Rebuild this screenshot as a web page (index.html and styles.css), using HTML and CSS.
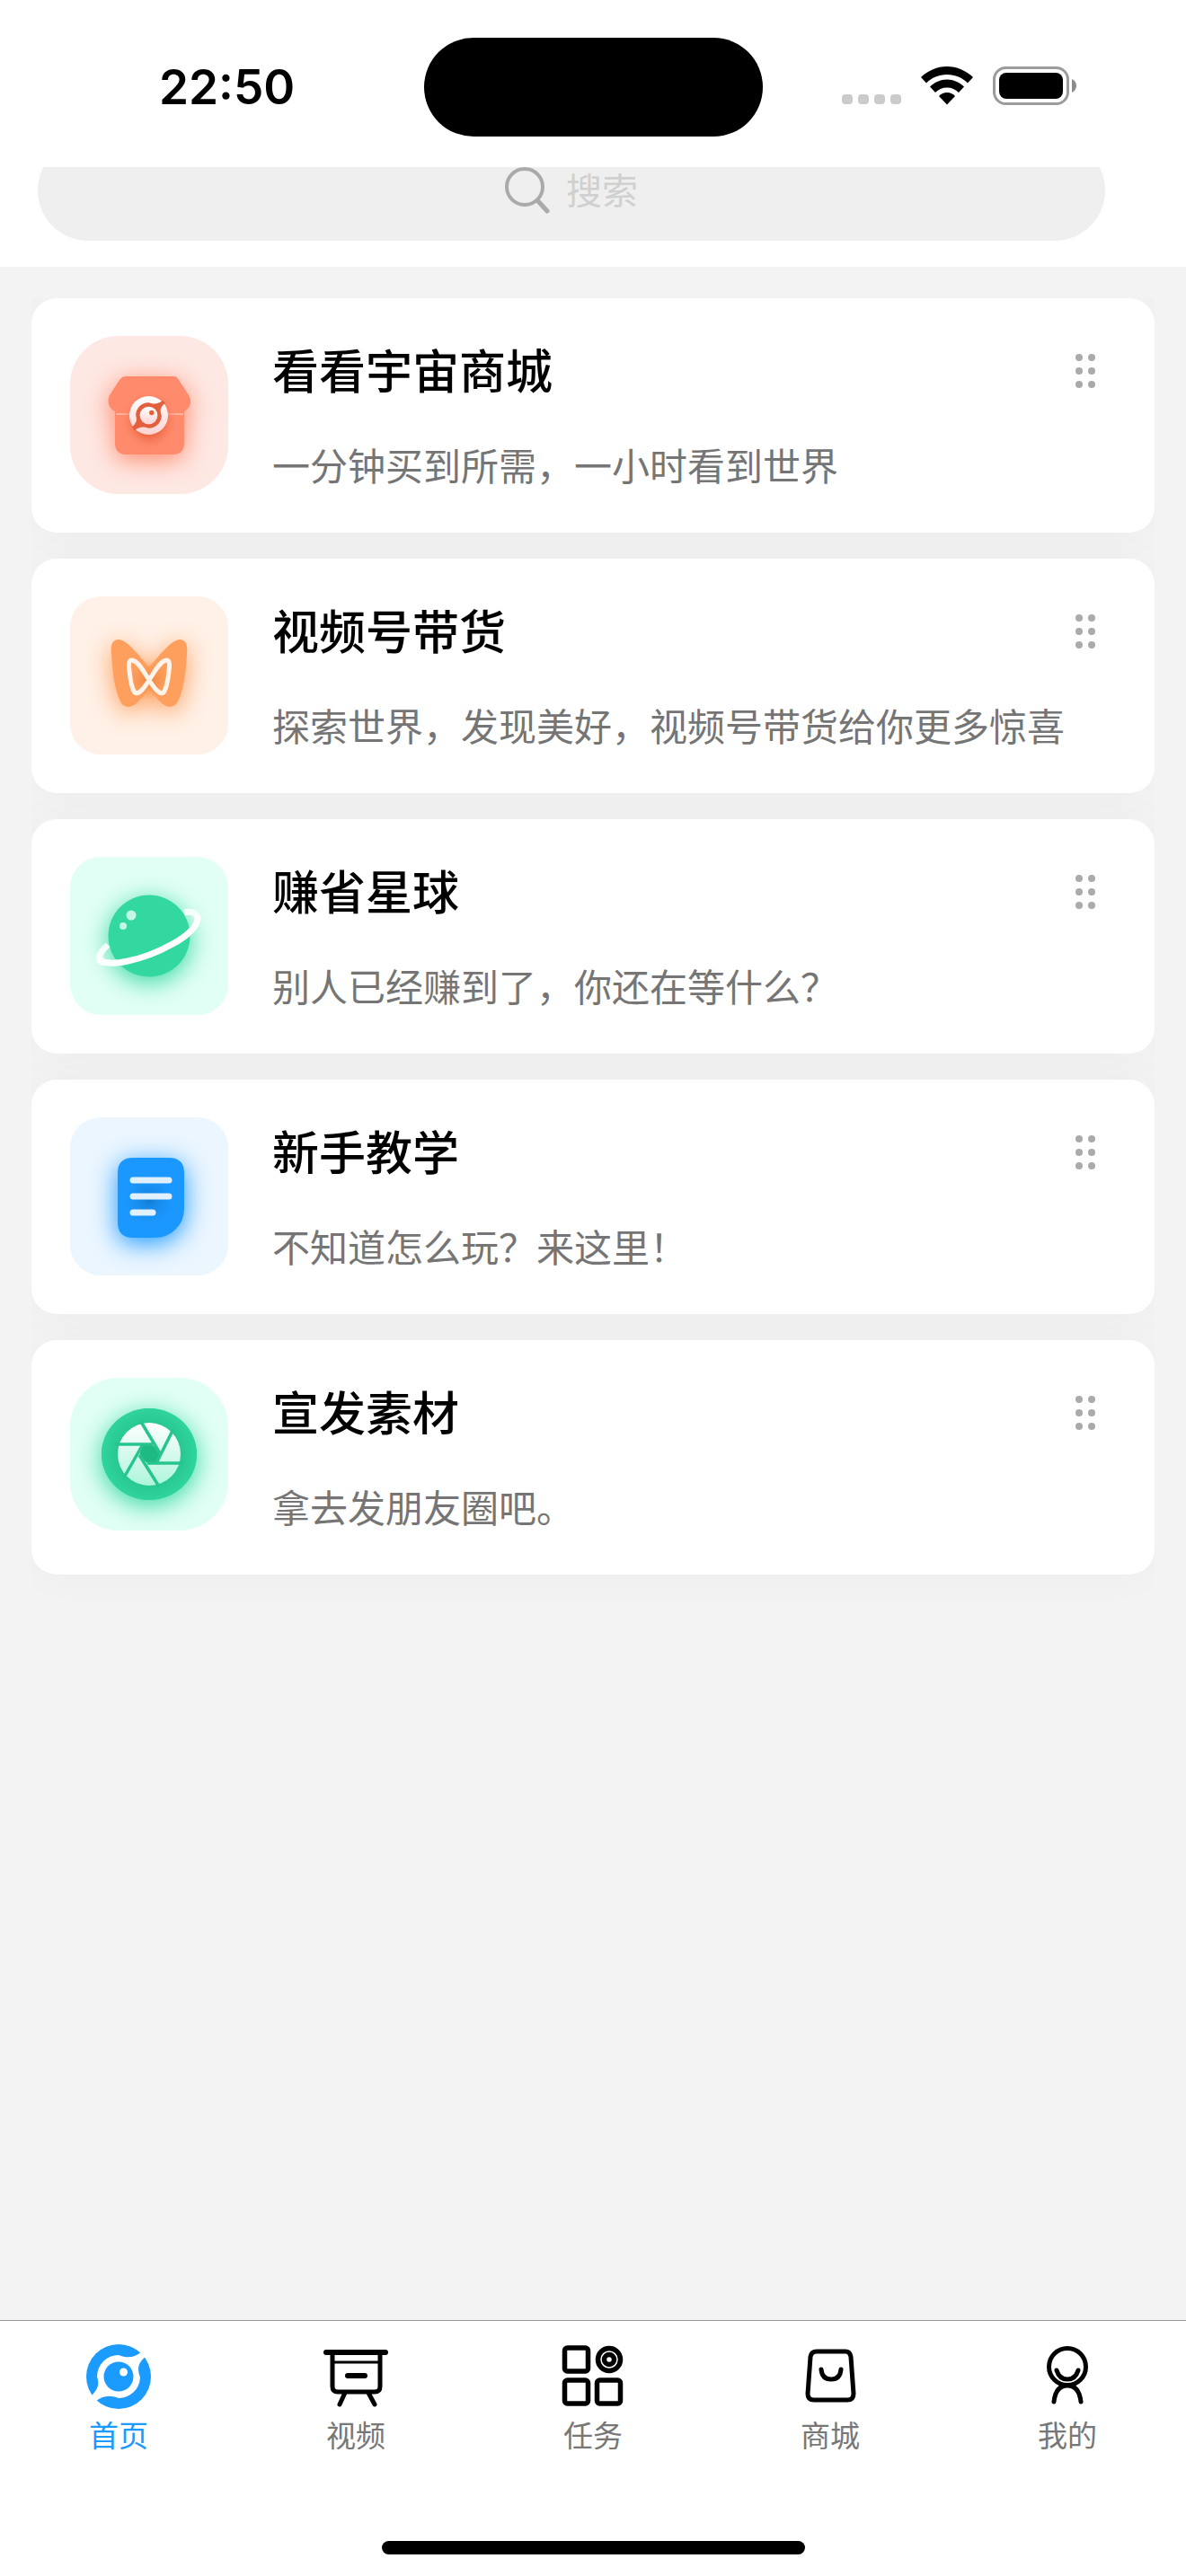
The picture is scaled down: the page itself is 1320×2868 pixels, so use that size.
FILE: index.html
```html
<!DOCTYPE html>
<html lang="zh-CN">
<head>
  <meta charset="UTF-8">
  <meta name="viewport" content="width=device-width, initial-scale=1.0">
  <title>首页</title>
  <link rel="stylesheet" href="styles.css">
</head>
<body>
  <!-- logo, shared by the shop card and the home tab -->
  <svg class="defs" aria-hidden="true">
    <defs>
      <symbol id="logo" viewBox="0 0 72 72">
        <circle class="logo-disc" cx="36" cy="36" r="36"/>
        <path class="logo-gap" d="M36 12 C46 16 54 15 62 8 L67 13 C58 20 56 26 60 37 A24 24 0 0 1 36 60 C26 56 18 57 10 64 L5 58 C13 50 15 45 12 36 A24 24 0 0 1 36 12 Z"/>
        <circle class="logo-disc" cx="36" cy="36" r="16.500"/>
        <circle class="logo-gap" cx="41.500" cy="31" r="4.500"/>
      </symbol>
      <linearGradient id="fade-pink" x1="0" y1="0" x2="0" y2="1">
        <stop offset="0" stop-color="#fff"/><stop offset="1" stop-color="#fdd3d3"/>
      </linearGradient>
      <linearGradient id="fade-green" x1="0" y1="0" x2="0" y2="1">
        <stop offset="0" stop-color="#fff"/><stop offset="1" stop-color="#adf5dc"/>
      </linearGradient>
      <radialGradient id="shade-red">
        <stop offset="0" stop-color="#e0542f"/><stop offset="0.5" stop-color="#e8633f" stop-opacity="0.8"/><stop offset="1" stop-color="#ff8a6c" stop-opacity="0"/>
      </radialGradient>
      <radialGradient id="shade-orange">
        <stop offset="0" stop-color="#e8833c"/><stop offset="1" stop-color="#ff9f5d" stop-opacity="0"/>
      </radialGradient>
      <radialGradient id="shade-blue">
        <stop offset="0" stop-color="#137cd4"/><stop offset="1" stop-color="#1b98ff" stop-opacity="0"/>
      </radialGradient>
      <radialGradient id="shade-green">
        <stop offset="0.3" stop-color="#1fba83"/><stop offset="1" stop-color="#30d49d"/>
      </radialGradient>
    </defs>
  </svg>

  <div class="status-bar">
    <div class="time">22:50</div>
    <div class="island"></div>
    <div class="status-icons">
      <svg width="66" height="12" viewBox="0 0 66 12" fill="#cbcbcb">
        <rect width="12" height="11" rx="4"/><rect x="18" width="12" height="11" rx="4"/><rect x="36" width="12" height="11" rx="4"/><rect x="54" width="12" height="11" rx="4"/>
      </svg>
      <svg width="58" height="43" viewBox="0 0 58 43">
        <path d="M29 0 C40 0 50 4.500 58 12 L52 18.500 C46 12.500 38 9 29 9 C20 9 12 12.500 6 18.500 L0 12 C8 4.500 18 0 29 0 Z"/>
        <path d="M29 14.500 C36 14.500 43 17.500 48 22.500 L42 29 C38.500 25.500 34 23.500 29 23.500 C24 23.500 19.500 25.500 16 29 L10 22.500 C15 17.500 22 14.500 29 14.500 Z"/>
        <path d="M29 29 C32.500 29 35.500 30.500 38 33 L29 42.500 L20 33 C22.500 30.500 25.500 29 29 29 Z"/>
      </svg>
      <svg width="94" height="43" viewBox="0 0 94 43">
        <rect x="1.500" y="1.500" width="82" height="40" rx="13" fill="none" stroke="#9b9b9b" stroke-width="3"/>
        <rect x="7" y="7" width="71" height="29" rx="8"/>
        <path d="M88 14 C91 15.500 93 18 93 21.500 C93 25 91 27.500 88 29 Z" fill="#8c8c8c"/>
      </svg>
    </div>
  </div>

  <header class="search-area">
    <label class="search">
      <svg width="50" height="54" viewBox="0 0 50 54" fill="none" stroke="#aaa" stroke-linecap="round">
        <circle cx="22" cy="23" r="20" stroke-width="4"/>
        <path d="M36 38 L47 50" stroke-width="5"/>
      </svg>
      <input type="text" placeholder="搜索" aria-label="搜索">
    </label>
  </header>

  <main>
    <ul class="list">
      <li class="card">
        <svg class="tile round red" viewBox="0 0 176 176">
          <g class="glow">
            <path d="M50 84 H127 V119 Q127 132 114 132 H63 Q50 132 50 119 Z"/>
            <path d="M62 45 H115 Q119 45 121 49 L132 66 C138 77 130 86 118 86 H59 C47 86 39 77 44 66 L55 49 Q58 45 62 45 Z"/>
          </g>
          <path d="M51 87 H126" stroke="#ffb49f" stroke-width="2"/>
          <ellipse cx="88" cy="94" rx="32" ry="34" fill="url(#shade-red)"/>
          <use href="#logo" x="66" y="67" width="43" height="43"/>
        </svg>
        <div class="info">
          <h2>看看宇宙商城</h2>
          <p>一分钟买到所需，一小时看到世界</p>
        </div>
        <button class="handle" aria-label="拖动"><i></i><i></i><i></i><i></i><i></i><i></i></button>
      </li>

      <li class="card">
        <svg class="tile orange" viewBox="0 0 176 176">
          <path class="glow" d="M88 79 C76 65 64 49 54 48 C46 48 45 56 46 64 C47 85 50 105 56 117 C60 125 68 124 74 119 C80 113 84 108 88 103 C92 108 96 113 102 119 C108 124 115 125 120 117 C126 105 129 85 130 64 C131 56 130 48 122 48 C112 49 100 65 88 79 Z"/>
          <ellipse cx="88" cy="93" rx="28" ry="22" fill="url(#shade-orange)"/>
          <path d="M88 93 C82 84 76 72 69 71 C65 71 65 76 66 83 C67 93 69 103 72 107 C76 110 82 103 88 93 C94 84 100 72 107 71 C111 71 111 76 110 83 C109 93 107 103 104 107 C100 110 94 103 88 93 Z" fill="none" stroke="#fff3ea" stroke-width="5"/>
        </svg>
        <div class="info">
          <h2>视频号带货</h2>
          <p>探索世界，发现美好，视频号带货给你更多惊喜</p>
        </div>
        <button class="handle" aria-label="拖动"><i></i><i></i><i></i><i></i><i></i><i></i></button>
      </li>

      <li class="card">
        <svg class="tile green" viewBox="0 0 176 176">
          <circle class="glow" cx="88" cy="88" r="45.500"/>
          <path d="M42 98 C31 108 29 117 37 118 M127 62 C136 60 142 63 142 69" fill="none" stroke="#f5fffb" stroke-width="7"/>
          <path d="M33 113 C38 125 82 115 114 97 C131 88 142 77 142 68" fill="none" stroke="#fff" stroke-width="7" stroke-linecap="round"/>
          <circle cx="68" cy="65" r="5.500" fill="#c4f8e5"/>
          <circle cx="59" cy="77" r="4" fill="#c4f8e5"/>
        </svg>
        <div class="info">
          <h2>赚省星球</h2>
          <p>别人已经赚到了，你还在等什么？</p>
        </div>
        <button class="handle" aria-label="拖动"><i></i><i></i><i></i><i></i><i></i><i></i></button>
      </li>

      <li class="card">
        <svg class="tile blue" viewBox="0 0 176 176">
          <path class="glow" d="M70 45 H110 Q127 45 127 62 V101 Q127 116 117 125 Q108 134 94 134 H70 Q53 134 53 117 V62 Q53 45 70 45 Z"/>
          <ellipse cx="88" cy="92" rx="34" ry="34" fill="url(#shade-blue)"/>
          <path d="M70 70 H110 M70 88 H110 M70 106 H92" stroke="#e0f0ff" stroke-width="7" stroke-linecap="round"/>
        </svg>
        <div class="info">
          <h2>新手教学</h2>
          <p>不知道怎么玩？来这里！</p>
        </div>
        <button class="handle" aria-label="拖动"><i></i><i></i><i></i><i></i><i></i><i></i></button>
      </li>

      <li class="card">
        <svg class="tile round short green" viewBox="0 0 176 170">
          <ellipse class="glow" cx="88" cy="85" rx="53" ry="51"/>
          <ellipse cx="88" cy="85" rx="53" ry="51" fill="url(#shade-green)"/>
          <circle cx="88" cy="85" r="35" fill="url(#fade-green)"/>
          <path d="M91 74 L100 83 L97 95 L86 95 L77 87 L80 75 Z" fill="#1fba83"/>
          <path d="M79 49 L100 84 M115 57 L96 95 M126 95 H86 M99 121 L77 86 M60 111 L81 74 M50 74 H92" stroke="#27c58e" stroke-width="3.500"/>
        </svg>
        <div class="info">
          <h2>宣发素材</h2>
          <p>拿去发朋友圈吧。</p>
        </div>
        <button class="handle" aria-label="拖动"><i></i><i></i><i></i><i></i><i></i><i></i></button>
      </li>
    </ul>
  </main>

  <footer class="tab-bar">
    <nav class="tabs">
      <a class="tab active" href="#">
        <svg width="72" height="72"><use href="#logo"/></svg>
        <span>首页</span>
      </a>
      <a class="tab" href="#">
        <svg width="72" height="72" viewBox="0 0 72 72">
          <path d="M3 9 H69" stroke-width="6"/>
          <path d="M10 10 V47 Q10 53 16 53 H57 Q63 53 63 47 V10 M24 54 L18 67 M50 54 L57 67" stroke-width="5"/>
          <path d="M10 20 H63" stroke-width="3"/>
          <path d="M27 35 H46" stroke-width="6"/>
        </svg>
        <span>视频</span>
      </a>
      <a class="tab" href="#">
        <svg width="72" height="72" viewBox="0 0 72 72" stroke-width="5.500">
          <rect x="4.500" y="4" width="26" height="26" rx="3"/>
          <rect x="4.500" y="40" width="26" height="26" rx="3"/>
          <rect x="40.500" y="40" width="26" height="26" rx="3"/>
          <circle cx="54" cy="17" r="12.500"/>
          <circle cx="54" cy="17" r="5.500"/>
        </svg>
        <span>任务</span>
      </a>
      <a class="tab" href="#">
        <svg width="72" height="72" viewBox="0 0 72 72" stroke-width="5">
          <path d="M21 8 H53 Q58 8 59 14 L62 55 Q62 62 55 62 H18 Q11 62 11 55 L14 14 Q15 8 21 8 Z"/>
          <path d="M26 28 Q27 39 37 39 Q47 39 48 28"/>
        </svg>
        <span>商城</span>
      </a>
      <a class="tab" href="#">
        <svg width="72" height="72" viewBox="0 0 72 72" stroke-width="5">
          <circle cx="36" cy="25" r="20.500"/>
          <path d="M24 29 Q27 39 36 39 Q45 39 48 29 M21 64 Q23 46 36 46 Q49 46 51 64"/>
        </svg>
        <span>我的</span>
      </a>
    </nav>
    <div class="home-indicator"></div>
  </footer>
</body>
</html>
```
FILE: styles.css
```css
* {
  box-sizing: border-box;
}
body {
  margin: 0;
  min-height: 100vh;
  display: flex;
  flex-direction: column;
  background: #f3f3f3;
  color: #000;
  font-family: "Noto Sans CJK SC", sans-serif;
}
h2, p, ul {
  margin: 0;
  padding: 0;
}
svg {
  display: block;
  flex: none;
}
.defs {
  position: absolute;
  width: 0;
  height: 0;
}
.logo-disc {
  fill: var(--disc);
}
.logo-gap {
  fill: var(--gap);
}

/* status bar */
.status-bar {
  display: grid;
  grid-template-columns: 1fr 377px 1fr;
  align-items: center;
  height: 186px;
  padding: 42px 0 34px;
  background: #fff;
}
.time {
  padding-left: 177px;
  font: 600 53px/64px Inter, sans-serif;
}
.island {
  height: 110px;
  border-radius: 55px;
  background: #000;
}
.status-icons {
  display: flex;
  justify-content: flex-end;
  align-items: flex-end;
  gap: 22px;
  padding: 0 121px 4px 0;
}

/* search */
.search-area {
  padding: 0 90px 29px 42px;
  background: #fff;
  overflow: hidden;
}
.search {
  display: flex;
  justify-content: center;
  align-items: center;
  gap: 18px;
  height: 112px;
  margin-top: -30px;
  border-radius: 56px;
  background: #efefef;
}
.search input {
  width: 80px;
  padding: 0 0 4px;
  border: 0;
  outline: 0;
  background: none;
  font: 40px/56px "Noto Sans CJK SC", sans-serif;
}
.search input::placeholder {
  color: #d0d0d0;
  opacity: 1;
}

/* card list */
main {
  flex: 1;
  padding: 35px 35px 0;
}
.list {
  display: flex;
  flex-direction: column;
  gap: 29px;
  padding-bottom: 60px;
  list-style: none;
  overflow: hidden;
}
.card {
  display: flex;
  align-items: flex-start;
  min-height: 261px;
  padding: 42px 66px 42px 43px;
  border-radius: 28px;
  background: #fff;
  box-shadow: 0 0 54px rgba(0, 0, 0, 0.03);
}
.tile {
  width: 176px;
  height: 176px;
  border-radius: 34px;
}
.tile.round {
  border-radius: 54px;
}
.tile.short {
  height: 170px;
}
.red {
  --disc: url(#fade-pink);
  --gap: #e2603c;
  --main: #ff8a6c;
  background: #fee8e3;
}
.orange {
  --main: #ff9f5d;
  background: #fff1e7;
}
.green {
  --main: #33d8a0;
  background: #e2fff5;
}
.blue {
  --main: #1b98ff;
  background: #ebf6ff;
}
.glow {
  fill: var(--main);
  filter: drop-shadow(0 6px 14px var(--main));
}
.info {
  flex: 1;
  padding: 5px 0 0 49px;
}
.info h2 {
  font-size: 52px;
  line-height: 64px;
  font-weight: 500;
}
.info p {
  margin-top: 46px;
  font-size: 42px;
  line-height: 56px;
  color: #757575;
}
.handle {
  display: grid;
  grid-template-columns: 8px 8px;
  gap: 7px 6px;
  margin-top: 20px;
  padding: 0;
  border: 0;
  background: none;
}
.handle i {
  width: 8px;
  height: 8px;
  border-radius: 50%;
  background: #aaa;
}

/* tab bar */
.tab-bar {
  display: flex;
  flex-direction: column;
  justify-content: space-between;
  align-items: center;
  height: 285px;
  padding: 26px 0 24px;
  border-top: 1px solid #999;
  background: #fff;
}
.tabs {
  display: flex;
  align-self: stretch;
}
.tab {
  flex: 1;
  display: flex;
  flex-direction: column;
  align-items: center;
  gap: 8px;
  color: #777;
  font-size: 33px;
  line-height: 40px;
  text-decoration: none;
}
.tab svg {
  fill: none;
  stroke: #000;
  stroke-linecap: round;
}
.tab.active {
  --disc: #1c9bff;
  --gap: #fff;
  color: #1c9bff;
}
.tab.active svg {
  stroke: none;
}
.home-indicator {
  width: 471px;
  height: 15px;
  border-radius: 8px;
  background: #000;
}
```
